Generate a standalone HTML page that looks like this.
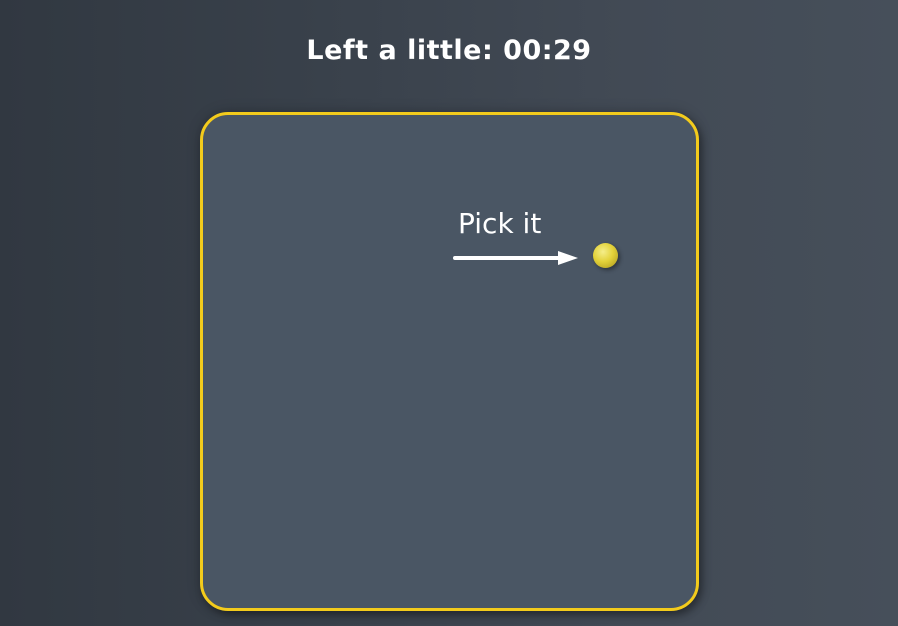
<!DOCTYPE html>
<html><head><meta charset="utf-8"><style>
html,body{margin:0;padding:0;}
body{width:898px;height:626px;overflow:hidden;position:relative;
background:linear-gradient(90deg,#313841 0%,#3a424c 40%,#424a55 70%,#464f5a 100%);
font-family:"DejaVu Sans","Liberation Sans",sans-serif;}
h1{position:absolute;top:35px;left:0;width:898px;text-align:center;margin:0;color:#fff;font-size:27px;font-weight:bold;letter-spacing:0.5px;}
.box{position:absolute;left:200px;top:112px;width:493px;height:493px;border:3px solid #f3cb1c;border-radius:28px;background:#4a5664;box-shadow:3px 4px 8px rgba(0,0,0,0.35),0 0 14px rgba(0,0,0,0.2);}
.lbl{position:absolute;left:458px;top:207px;color:#fff;font-size:28px;font-family:"DejaVu Sans","Liberation Sans",sans-serif;}
.ball{position:absolute;left:593px;top:243px;width:25px;height:25px;border-radius:50%;
background:radial-gradient(circle at 40% 35%,#f5ee8a 0%,#e3d23a 45%,#a8941a 100%);box-shadow:2px 2px 4px rgba(0,0,0,0.4);}
</style></head><body>
<h1>Left a little: 00:29</h1>
<div class="box"></div>
<div class="lbl">Pick it</div>
<svg style="position:absolute;left:450px;top:248px" width="132" height="20"><line x1="5" y1="10" x2="112" y2="10" stroke="#fff" stroke-width="4" stroke-linecap="round"/><polygon points="108,3 128,10 108,17" fill="#fff"/></svg>
<div class="ball"></div>
</body></html>
